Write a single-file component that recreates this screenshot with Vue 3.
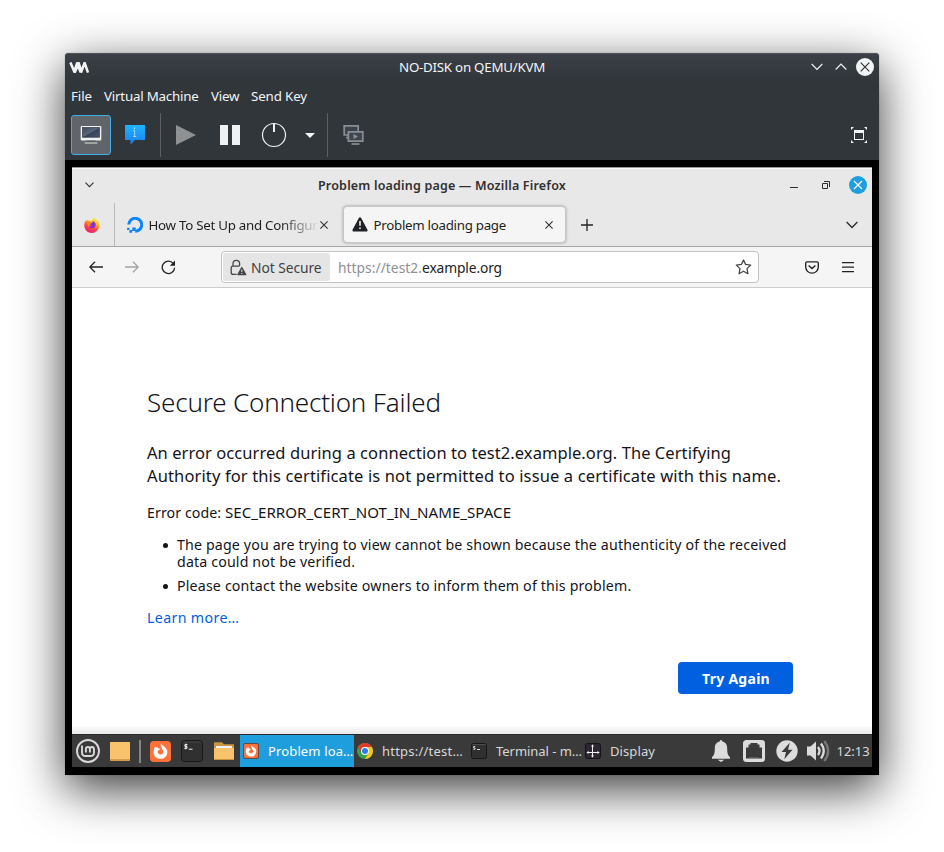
<script setup>
const menus = [
  { label: 'File', cls: 'm-file' },
  { label: 'Virtual Machine', cls: 'm-vm' },
  { label: 'View', cls: 'm-view' },
  { label: 'Send Key', cls: 'm-key' },
]
</script>

<template>
  <div class="desktop">
    <div class="vm-window">
      <header class="vm-title">
        <svg class="vm-logo" width="21" height="11" viewBox="0 0 21 11" fill="none" stroke="#f2f3f4" stroke-width="2.5">
          <path d="M1.4 .4 L5.2 9.4 L8.4 .4 M5.8 10.6 L9.6 .8 L12.4 9.4 L15.6 .8 L19 10.6 M8 .8 L11.6 10.4" />
        </svg>
        <span class="vm-caption">NO-DISK on QEMU/KVM</span>
        <div class="vm-controls">
          <svg width="12" height="8" viewBox="0 0 12 8" fill="none" stroke="#f0f1f2" stroke-width="1.2"><path d="M.7 1 L6 6.3 L11.3 1" /></svg>
          <svg width="12" height="8" viewBox="0 0 12 8" fill="none" stroke="#f0f1f2" stroke-width="1.2"><path d="M.7 6.5 L6 1.2 L11.3 6.5" /></svg>
          <svg width="18" height="18" viewBox="0 0 18 18"><circle cx="9" cy="9" r="9" fill="#f3f4f5" /><path d="M4.7 4.7 L13.3 13.3 M13.3 4.7 L4.7 13.3" stroke="#31363b" stroke-width="1.2" /></svg>
        </div>
      </header>

      <nav class="vm-menu">
        <span v-for="m in menus" :key="m.label" :class="m.cls">{{ m.label }}</span>
      </nav>

      <div class="vm-tools">
        <div class="tool-active">
          <svg width="22" height="20" viewBox="0 0 22 20">
            <defs>
              <linearGradient id="scr" x1="0" y1="0" x2="1" y2="1"><stop offset="0" stop-color="#3b495b" /><stop offset=".5" stop-color="#58687c" /><stop offset=".52" stop-color="#36445a" /><stop offset="1" stop-color="#46566b" /></linearGradient>
            </defs>
            <rect x=".7" y="1" width="20.6" height="14.6" rx="1" fill="#f1f1f1" />
            <rect x="2.6" y="2.6" width="16.8" height="9.6" fill="url(#scr)" stroke="#2b3440" stroke-width=".7" />
            <rect x="6.5" y="15.6" width="9" height="1.6" fill="#55585b" />
            <rect x="4.5" y="17.2" width="13" height="1.6" rx=".8" fill="#b8babb" />
          </svg>
        </div>
        <svg class="info" width="20" height="20" viewBox="0 0 20 20">
          <defs><linearGradient id="inf" x1="0" y1="0" x2="0" y2="1"><stop offset="0" stop-color="#1cb4fb" /><stop offset="1" stop-color="#1e7ef2" /></linearGradient></defs>
          <path d="M0 0 H20 V15 H10 L5.5 19.5 V15 H0Z" fill="url(#inf)" />
          <path d="M9 2.5 H10 V4 H9Z" fill="#d8efff" /><path d="M8.3 5.5 H9.6 V11.5 M8 11.5 H11.2" fill="none" stroke="#c3e6ff" stroke-width=".8" />
        </svg>
        <i class="vm-sep"></i>
        <svg class="play" width="20" height="20" viewBox="0 0 20 20"><path d="M0 0 L20 10 L0 20Z" fill="#8e9092" /></svg>
        <svg class="pause" width="20" height="20" viewBox="0 0 20 20"><path d="M0 0 H8 V20 H0Z M12 0 H20 V20 H12Z" fill="#f0f1f2" /></svg>
        <svg class="power" width="26" height="26" viewBox="0 0 26 26" fill="none" stroke="#f0f1f2"><circle cx="13" cy="13" r="11.5" stroke-width="1.2" /><path d="M13 1.5 V10" stroke-width="2" /></svg>
        <svg class="drop" width="10" height="5" viewBox="0 0 10 5"><path d="M0 0 H10 L5 5Z" fill="#f6f7f7" /></svg>
        <i class="vm-sep sep-two"></i>
        <svg class="screens" width="21" height="22" viewBox="0 0 21 22" fill="#39424d" stroke="#8b8e90" stroke-width="1.7">
          <path d="M1.2 1.8 H15.2 V11 H1.2Z" /><path d="M3 13.6 H7" />
          <path d="M5.4 7.8 H19.8 V17.2 H5.4Z" fill="#3d4651" />
          <path d="M10.5 10 L15 12.5 L10.5 15Z" fill="#909294" stroke="none" /><path d="M8.5 20 H16.5" />
        </svg>
        <svg class="fullscreen" width="16" height="16" viewBox="0 0 16 16" fill="#f3f4f5">
          <path d="M0 0 H3 L0 3Z M16 0 V3 L13 0Z M0 16 V13 L3 16Z M16 16 H13 L16 13Z" />
          <path d="M3 3 H13 V13 H3Z M4 6 V12 H12 V6Z" fill-rule="evenodd" />
        </svg>
      </div>

      <div class="guest-frame">
        <div class="guest">
          <header class="ff-title">
            <svg class="ff-menu" width="9" height="6" viewBox="0 0 9 6" fill="none" stroke="#303030" stroke-width="1.1"><path d="M.5 .7 L4.5 4.7 L8.5 .7" /></svg>
            <span class="ff-caption">Problem loading page — Mozilla Firefox</span>
            <svg class="ff-min" width="8" height="10" viewBox="0 0 8 10"><path d="M0 7.5 H8" stroke="#303030" /></svg>
            <svg class="ff-max" width="8" height="8" viewBox="0 0 8 8" fill="none" stroke="#303030"><path d="M.5 2.5 H5.5 V7.5 H.5Z M2 .5 H7.5 V6" /></svg>
            <svg class="ff-close" width="18" height="18" viewBox="0 0 18 18"><circle cx="9" cy="9" r="9" fill="#1f9ede" /><path d="M5 5 L13 13 M13 5 L5 13" stroke="#fff" stroke-width="1.2" /></svg>
          </header>

          <div class="tabs">
            <div class="pinned">
              <svg width="16" height="16" viewBox="0 0 16 16">
                <defs>
                  <linearGradient id="fx" x1=".8" y1="0" x2=".35" y2="1"><stop offset=".1" stop-color="#fff04a" /><stop offset=".4" stop-color="#ffb01f" /><stop offset=".65" stop-color="#ff4b3c" /><stop offset="1" stop-color="#e91a7b" /></linearGradient>
                </defs>
                <path d="M10 .2 C10.3 2 13 2.4 14.3 4 C17.2 8.8 14.2 15.8 8 15.9 C2.6 16 0 11.7 .3 7.6 C.5 5.2 1.3 3.8 2 3 L2.6 4.2 L3.5 2.4 L5 4 C6.4 3.5 7.2 3.6 8.2 4 C7.8 2.3 9 .8 10 .2Z" fill="url(#fx)" />
                <path d="M8.5 4.2 C12 4.7 12.6 8.3 10.4 10.4 C8.5 12.1 5.3 11 5.2 8.5 C6 9.2 7.1 9 7.8 8.2 L5.5 7.2 C6 6 7.5 6 8.5 5.7Z" fill="#7d32d8" />
                <path d="M3.4 5 C5.2 4.2 7.3 4.7 8.2 6.1 C6.5 6.3 6.6 7.6 5.4 7.6 C5 8.5 5.3 9.6 6 10.2 C3.8 9.4 3.1 7 3.4 5Z" fill="#ff911e" />
              </svg>
            </div>
            <div class="tab">
              <svg class="ocean" width="16" height="16" viewBox="0 0 16 16"><path d="M1.7 7.5 A6.5 6.5 0 1 1 8.2 14.3" fill="none" stroke="#0b84ff" stroke-width="3" /><path d="M5.3 10.5 H8.7 V14 H5.3Z M2.4 13 H5.2 V15.7 H2.4Z M.1 10.8 H2.4 V13 H.1Z" fill="#0b84ff" /></svg>
              <span class="tab-text faded">How To Set Up and Configur</span>
              <svg width="8" height="8" viewBox="0 0 8 8" stroke="#333" stroke-width="1.1"><path d="M.4 .4 L7.6 7.6 M7.6 .4 L.4 7.6" /></svg>
            </div>
            <div class="tab tab-selected">
              <svg class="warn" width="16" height="15" viewBox="0 0 16 15"><path d="M8 1.7 L14.3 13.3 H1.7Z" fill="#202124" stroke="#202124" stroke-width="2.6" stroke-linejoin="round" /><path d="M8 4 V8.8 M8 10.4 V12" stroke="#fff" stroke-width="1.5" /></svg>
              <span class="tab-text">Problem loading page</span>
              <svg class="close-two" width="8" height="8" viewBox="0 0 8 8" stroke="#333" stroke-width="1.1"><path d="M.4 .4 L7.6 7.6 M7.6 .4 L.4 7.6" /></svg>
            </div>
            <svg class="plus" width="12" height="12" viewBox="0 0 12 12" stroke="#222" stroke-width="1.3"><path d="M0 6 H12 M6 0 V12" /></svg>
            <svg class="tab-list" width="12" height="8" viewBox="0 0 12 8" fill="none" stroke="#2b2b2b" stroke-width="1.3"><path d="M.6 1 L6 6.5 L11.4 1" /></svg>
          </div>

          <div class="toolbar">
            <svg class="back" width="14" height="12" viewBox="0 0 14 12" fill="none" stroke="#222" stroke-width="1.3"><path d="M14 6 H1 M6 .8 L.8 6 L6 11.2" /></svg>
            <svg class="forward" width="14" height="12" viewBox="0 0 14 12" fill="none" stroke="#a2a2a3" stroke-width="1.3"><path d="M0 6 H13 M8 .8 L13.2 6 L8 11.2" /></svg>
            <svg class="reload" width="15" height="15" viewBox="0 0 15 15" fill="none" stroke="#222" stroke-width="1.35"><path d="M12.2 3.4 A6.2 6.2 0 1 0 13.6 7.7" /><path d="M14 .6 V5.8 H8.8Z" fill="#222" stroke="none" /></svg>
            <div class="urlbar">
              <div class="identity">
                <svg width="17" height="17" viewBox="0 0 17 17" fill="none" stroke="#464649" stroke-width="1.3"><path d="M6.6 15.4 H3 Q1.2 15.4 1.2 13.6 V9 Q1.2 7.2 3 7.2 H9.5 M3 7 V4.8 A3.3 3.5 0 0 1 9.6 4.8 V7" /><path d="M11.8 8.6 L15.7 15.6 H7.9Z" fill="#464649" stroke-linejoin="round" /><path d="M11.8 10.5 V13 M11.8 14 V15" stroke="#e5e5e6" stroke-width="1" /></svg>
                <span>Not Secure</span>
              </div>
              <div class="url"><span class="url-dim">https://test2.</span><span class="url-host">example.org</span></div>
              <svg class="star" width="17" height="16" viewBox="0 0 17 16" fill="none" stroke="#464649" stroke-width="1.3" stroke-linejoin="round"><path d="M8.5 1 L10.6 5.4 L15.7 6.1 L12 9.6 L12.9 14.7 L8.5 12.2 L4.1 14.7 L5 9.6 L1.3 6.1 L6.4 5.4Z" /></svg>
            </div>
            <svg class="pocket" width="14" height="13" viewBox="0 0 14 13" fill="none" stroke="#222" stroke-width="1.35"><path d="M2 .8 H12 Q13.3 .8 13.3 2.1 V6 A6.3 6.2 0 0 1 .7 6 V2.1 Q.7 .8 2 .8Z M3.6 4.4 L7 7.6 L10.4 4.4" /></svg>
            <svg class="burger" width="12" height="11" viewBox="0 0 12 11" stroke="#222" stroke-width="1.1"><path d="M0 .6 H12 M0 5.1 H12 M0 9.6 H12" /></svg>
          </div>

          <main class="page">
            <h1>Secure Connection Failed</h1>
            <p class="lead"><span class="lead-one">An error occurred during a connection to test2.example.org. The Certifying</span><br /><span class="lead-two">Authority for this certificate is not permitted to issue a certificate with this name.</span></p>
            <p class="code">Error code: <span>SEC_ERROR_CERT_NOT_IN_NAME_SPACE</span></p>
            <ul>
              <li>The page you are trying to view cannot be shown because the authenticity of the received<br />data could not be verified.</li>
              <li class="li-two">Please contact the website owners to inform them of this problem.</li>
            </ul>
            <a>Learn more…</a>
            <button type="button">Try Again</button>
          </main>

          <footer class="panel">
            <svg class="mint" width="24" height="24" viewBox="0 0 24 24" fill="none" stroke="#d9d9d9"><circle cx="12" cy="12" r="11" stroke-width="1.9" /><path d="M6 6.5 V13.5 Q6 17 9.5 17 H14.5 Q18 17 18 13.5 V10.5 Q18 8 16 8 T13.9 10 V13.5 M13.9 10 Q13.9 8 11.9 8 T9.9 10 V13.5" stroke-width="1.9" /></svg>
            <svg class="desk" width="20" height="19" viewBox="0 0 20 19"><rect width="20" height="19" rx=".8" fill="#d29d4d" /><rect width="20" height="17" rx=".8" fill="#f9c36d" /></svg>
            <i class="panel-sep"></i>
            <svg class="fox-launch" width="21" height="21" viewBox="0 0 22 22">
              <rect width="22" height="22" rx="4" fill="#ff7139" />
              <path id="fox" d="M11.5 2.6 C11.7 4.5 17.8 6 18.2 11.2 C18.3 15.6 15 18.7 11 18.7 C6.8 18.7 3.7 15.5 3.8 11.4 C3.9 8.8 4.8 7 5.8 5.6 L6.4 7.2 L7.6 5.8 L8.2 7.5 L11 8.1 L9.2 9.8 C6.8 11.2 8.3 14.2 11 14.2 C13.8 14.2 14.7 11.2 13.3 9.2 L12.4 8.4 C13.2 7 10.2 5.5 11.5 2.6Z" fill="#fff" />
            </svg>
            <svg class="term-launch" width="22" height="22" viewBox="0 0 22 22"><rect x=".5" y=".5" width="21" height="21" rx="3" fill="#303030" stroke="#171717" /><path d="M1.5 2 H20" stroke="#555" stroke-width=".6" /><path d="M6.4 4.6 H3.9 V6.4 H6 V8.3 H3.3 M4.9 3.6 V9.3 M7.8 9.2 H11.5" fill="none" stroke="#f2f2f2" stroke-width="1" /></svg>
            <svg class="folder" width="20" height="18" viewBox="0 0 20 18"><path d="M0 1 Q0 .3 .7 .3 H8 L10 2.3 H19.3 Q20 2.3 20 3 V18 H0Z" fill="#c99545" /><path d="M2 4 H18 V7 H2Z" fill="#f3f3f3" /><path d="M0 6 H20 V17 H0Z" fill="#f9c36d" /></svg>

            <div class="task active">
              <svg width="16" height="16" viewBox="0 0 22 22"><rect width="22" height="22" rx="3" fill="#5b4a48" /><rect x="1.3" y="1.3" width="19.4" height="19.4" rx="2" fill="#ff7139" /><use href="#fox" /></svg>
              <span class="t-problem">Problem loa…</span>
            </div>
            <div class="task">
              <svg width="16" height="16" viewBox="0 0 16 16"><circle cx="8" cy="8" r="8" fill="#32a350" /><path d="M1.1 4 A8 8 0 0 1 14.9 4 H8 L4.5 10Z" fill="#e33b2e" /><path d="M14.9 4 A8 8 0 0 1 8 16 L11.5 10 L8 4Z" fill="#fcc21b" /><circle cx="8" cy="8" r="4" fill="#fff" /><circle cx="8" cy="8" r="3" fill="#2c7de9" /></svg>
              <span class="t-https">https://test…</span>
            </div>
            <div class="task">
              <svg width="16" height="16" viewBox="0 0 16 16"><rect x=".5" y=".5" width="15" height="15" rx="2" fill="#303030" stroke="#171717" /><path d="M1.5 1.5 H14.5" stroke="#666" stroke-width=".6" /><path d="M4.2 3.5 H2.7 V5 H4 V6.3 H2.5 M6 6.5 H9" fill="none" stroke="#e8e8e8" stroke-width=".9" /></svg>
              <span class="t-terminal">Terminal - m…</span>
            </div>
            <div class="task">
              <svg width="16" height="16" viewBox="0 0 16 16"><rect x=".5" y=".5" width="15" height="15" rx="2" fill="#2e2732" stroke="#151317" /><path d="M2 9.5 H14 M7.5 2 V14" stroke="#f2f2f2" stroke-width="1" /><path d="M7.5 1.3 L9 3.6 H6Z M7.5 14.7 L9 12.4 H6Z M1.3 9.5 L3.6 8 V11Z M14.7 9.5 L12.4 8 V11Z" fill="#f2f2f2" /></svg>
              <span class="t-display">Display</span>
            </div>

            <div class="tray">
              <svg width="18" height="22" viewBox="0 0 18 22" fill="#dcdcdc"><path d="M9 0 Q10.3 0 10.4 1.6 C14 2.5 15.2 5 15.2 8.5 C15.2 13.5 16 15.5 18 17 V18.7 H0 V17 C2 15.5 2.8 13.5 2.8 8.5 C2.8 5 4 2.5 7.6 1.6 Q7.7 0 9 0Z M5.6 19.8 H12.4 L9 22Z" /></svg>
              <svg width="22" height="22" viewBox="0 0 22 22"><rect width="22" height="22" rx="3.5" fill="#dcdcdc" /><path d="M3 18.5 V7.5 H5.5 V4.5 H7.5 V3 H14.5 V4.5 H16.5 V7.5 H19 V18.5Z" fill="#3a3a3a" /><path d="M6 17.8 H16" stroke="#777" stroke-width=".8" /></svg>
              <svg width="22" height="22" viewBox="0 0 22 22"><circle cx="11" cy="11" r="10.7" fill="#dcdcdc" /><path d="M13.8 2.8 L5.5 12 H10 L8.3 19.2 L16.5 9.8 H12Z" fill="#3a3a3a" /></svg>
              <svg width="23" height="22" viewBox="0 0 23 22"><path d="M0 6.5 H3.5 L9 1.5 V20.5 L3.5 15.5 H0Z" fill="#dcdcdc" /><path d="M11 7 Q14 11 11 15 M14 3.5 Q19.6 11 14 18.5" fill="none" stroke="#dcdcdc" stroke-width="2.3" /><path d="M17.3 1 Q25 11 17.3 21" fill="none" stroke="#777" stroke-width="2.4" /></svg>
            </div>
            <span class="clock">12:13</span>
          </footer>
        </div>
      </div>
    </div>
  </div>
</template>

<style>
body { margin: 0; background: #fff; overflow: hidden; }
</style>

<style scoped>
* { box-sizing: border-box; }
svg { display: block; flex: none; }
.desktop { width: 944px; height: 852px; padding: 53px 65px 77px; background: #fff; overflow: hidden; font-family: "Noto Sans", sans-serif; white-space: nowrap; }
.vm-window { width: 814px; height: 722px; border-radius: 4px 4px 0 0; background: #31363b; color: #f3f4f5; display: flex; flex-direction: column; box-shadow: 0 0 1px rgba(0, 0, 0, .5), 0 14px 48px rgba(0, 0, 0, .78); font-size: 13.33px; }
.vm-title { height: 27px; display: grid; grid-template-columns: 114px 1fr 114px; align-items: center; background: linear-gradient(#3b4047, #31363b); border-radius: 4px 4px 0 0; border-top: 1px solid #50555a; }
.vm-logo { margin-left: 4px; }
.vm-caption { text-align: center; letter-spacing: -.254px; }
.vm-controls { display: flex; align-items: center; justify-content: flex-end; gap: 12px; padding-right: 5px; }
.vm-controls svg:last-child { margin-left: -3px; }
.vm-menu { height: 32px; display: flex; align-items: center; gap: 13px; padding: 0 0 1px 6px; }
.m-file { width: 20px; letter-spacing: -.1px; }
.m-vm { width: 94px; letter-spacing: -.218px; }
.m-view { width: 27px; letter-spacing: -.2px; }
.m-key { letter-spacing: -.129px; }
.vm-tools { height: 48px; display: flex; align-items: center; padding: 0 12px 2px 6px; }
.tool-active { width: 40px; height: 40px; border: 1px solid #3daee9; border-radius: 3px; background: #616569; display: flex; align-items: center; justify-content: center; }
.info { margin-left: 14px; }
.vm-sep { width: 1px; height: 44px; background: #5d6165; margin-left: 15px; flex: none; }
.play { margin-left: 15px; }
.pause { margin-left: 24px; }
.power { margin-left: 21px; }
.drop { margin-left: 18px; }
.sep-two { margin-left: 12px; }
.screens { margin-left: 15px; }
.fullscreen { margin-left: auto; }
.guest-frame { height: 615px; background: #000; padding: 7px 7px 8px; }
.guest { width: 800px; height: 600px; background: #fff; display: flex; flex-direction: column; color: #242424; }
.ff-title { height: 36px; background: #e8e8e8; border-top: 1px solid #999; box-shadow: inset 0 1px #fafafa; display: flex; align-items: center; padding: 0 5px 1px 13px; }
.ff-caption { width: 248px; margin-left: 224px; font-size: 12.5px; font-weight: 600; letter-spacing: .183px; color: #303030; }
.ff-min { margin-left: 224px; }
.ff-max { margin-left: 24px; }
.ff-close { margin-left: 19px; }
.tabs { height: 44px; display: flex; align-items: center; background: #e8e8e8; border-bottom: 1px solid #a5a5a5; padding-right: 14px; }
.pinned { width: 43px; height: 43px; border-right: 1px solid #b9b9b9; padding: 14px 0 0 12px; }
.tab { width: 222px; height: 37px; display: flex; align-items: center; padding-left: 12px; font-size: 13.3px; color: #1f1f1f; flex: none; }
.ocean { margin-right: 5.5px; }
.tab-text { letter-spacing: -.277px; }
.faded { width: 169px; margin-right: 2.5px; letter-spacing: -.261px; -webkit-mask-image: linear-gradient(90deg, #000 78%, transparent 101%); mask-image: linear-gradient(90deg, #000 78%, transparent 101%); }
.tab-selected { width: 223px; margin-left: 6px; padding: 0 12px 0 8px; background: #f5f5f5; border: 1px solid #c8c8c8; border-radius: 4px; box-shadow: 0 0 3px rgba(0, 0, 0, .35); }
.warn { margin-right: 5.5px; }
.close-two { margin-left: auto; }
.plus { margin-left: 14.5px; }
.tab-list { margin-left: auto; }
.toolbar { height: 41px; flex: none; background: #f5f5f5; border-bottom: 1px solid #ccc; display: flex; align-items: center; padding: 0 18px 0 17px; }
.forward { margin-left: 22px; }
.reload { margin-left: 21.5px; }
.urlbar { width: 538px; height: 32px; margin-left: 45.5px; border: 1px solid #c2c2c2; border-radius: 4px; background: #fff; display: flex; align-items: center; padding: 0 6px 0 1px; font-size: 13.8px; }
.identity { width: 107px; height: 28px; background: #e5e5e6; border-radius: 3px; display: flex; align-items: center; gap: 4px; padding-left: 7px; color: #3f3f42; letter-spacing: -.061px; }
.url { margin-left: 8px; }
.url-dim { color: #8f8f93; letter-spacing: .036px; }
.url-host { letter-spacing: -.125px; color: #222; }
.star { margin-left: auto; }
.pocket { margin-left: 46px; }
.burger { margin-left: auto; }
.page { height: 446px; flex: none; padding: 96px 79px 0 75px; color: #15141a; background: linear-gradient(#fff 437px, #e9e9e9); display: flex; flex-direction: column; }
h1 { margin: 0; height: 36px; line-height: 36px; font-size: 26px; font-weight: 300; letter-spacing: -.18px; }
.lead { margin: 21px 0 0; font-size: 16.5px; line-height: 23px; }
.lead-one { letter-spacing: .064px; }
.lead-two { letter-spacing: .13px; }
.code { margin: 17px 0 0; font-size: 14.2px; line-height: 17px; letter-spacing: .077px; }
.code span { letter-spacing: .02px; font-size: 15.1px; }
ul { margin: 15px 0 0; padding-left: 30px; font-size: 14.2px; line-height: 17px; letter-spacing: .152px; list-style: none; }
li { position: relative; }
li::before { content: ""; position: absolute; left: -14px; top: 7px; width: 5px; height: 5px; border-radius: 50%; background: #15141a; }
.li-two { margin-top: 7px; letter-spacing: .17px; }
a { margin-top: 15px; font-size: 14.2px; line-height: 17px; letter-spacing: .36px; color: #0060df; }
button { width: 115px; height: 32px; margin-top: 36px; padding: 0 0 0 1px; align-self: flex-end; border: 0; border-radius: 4px; background: #0060df; color: #fff; font: 700 14px "Noto Sans", sans-serif; letter-spacing: .28px; }
.panel { height: 33px; background: #3a3a3a; border-top: 1px solid #292929; display: flex; align-items: center; padding-left: 4px; color: #d8d8d8; font-size: 13px; }
.desk { margin-left: 10px; }
.panel-sep { width: 2px; height: 23px; margin-left: 9px; background: #858585; }
.fox-launch { margin-left: 8.5px; }
.term-launch { margin-left: 10.5px; }
.folder { margin-left: 11px; }
.task { width: 114px; height: 32px; flex: none; display: flex; align-items: center; gap: 9px; padding-left: 3px; }
.folder + .task { margin-left: 6px; }
.active { background: #1f9ede; color: #fff; }
.t-problem { letter-spacing: .137px; }
.t-https { letter-spacing: .228px; }
.t-terminal { letter-spacing: -.046px; }
.t-display { letter-spacing: .094px; }
.tray { margin-left: auto; display: flex; align-items: center; gap: 11px; }
.tray svg:nth-child(2) { margin-left: 2px; }
.tray svg:last-child { margin-left: -2px; }
.clock { width: 35.5px; margin-left: 6.5px; }
</style>
